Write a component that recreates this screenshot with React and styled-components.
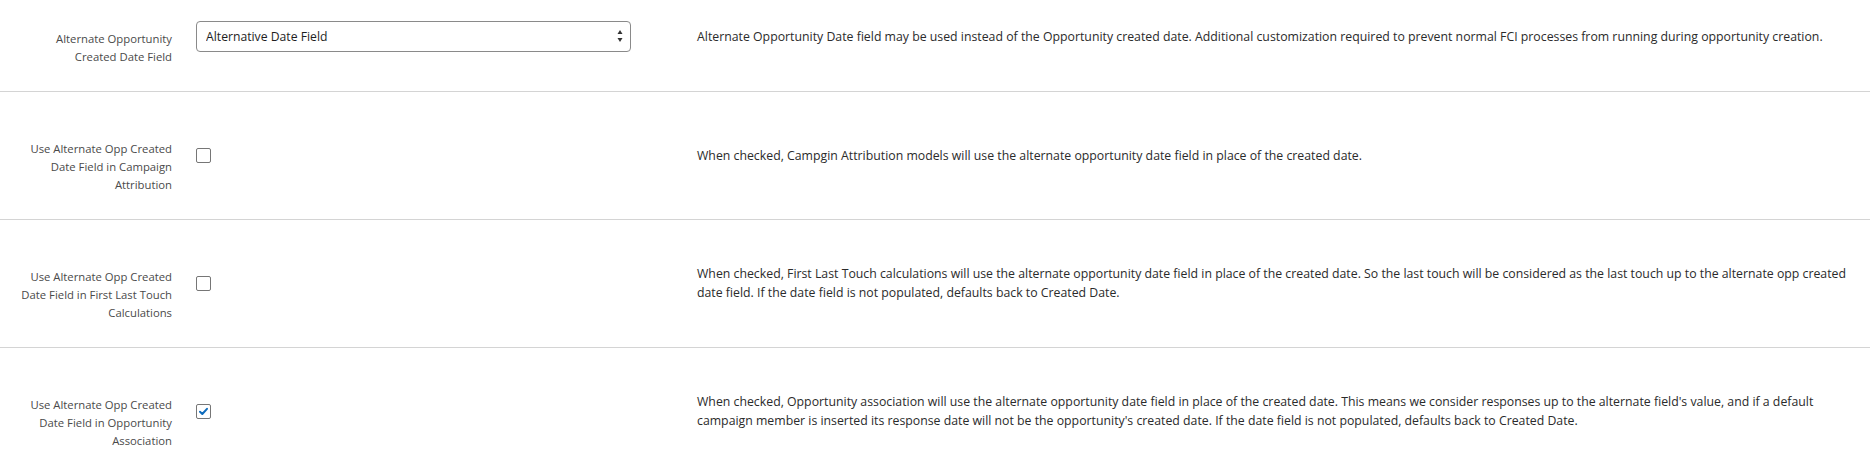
import React from 'react';
import styled, { createGlobalStyle } from 'styled-components';

const GlobalStyle = createGlobalStyle`
  html, body {
    margin: 0;
    padding: 0;
    background: #fff;
  }

  body {
    font-family: "Open Sans", "Noto Sans", "Liberation Sans", sans-serif;
    color: #181818;
  }
`;

const Page = styled.div`
  width: 100%;
`;

const Row = styled.div`
  display: flex;
  align-items: center;
  padding: ${(p) => (p.first ? '6px' : '24px')} 12px 25px 16px;
  border-bottom: 1px solid #d4d4d4;
`;

const Label = styled.div`
  width: 156px;
  flex-shrink: 0;
  margin-right: 24px;
  padding-top: 24px;
  text-align: right;
  font-size: 11.3px;
  line-height: 18px;
  color: #4a4a4a;
`;

const ControlCell = styled.div`
  width: 435px;
  flex-shrink: 0;
  display: flex;
  align-items: center;
`;

const Description = styled.div`
  flex: 1;
  margin-left: 66px;
  font-size: 12.3px;
  line-height: 19px;
  color: #2b2b2b;
`;

const SelectWrap = styled.div`
  position: relative;
  width: 100%;
`;

const Select = styled.select`
  appearance: none;
  -webkit-appearance: none;
  width: 100%;
  height: 31px;
  margin: 0;
  padding: 0 24px 0 9px;
  border: 1px solid #8a8a8a;
  border-radius: 4px;
  background: #fff;
  font-family: inherit;
  font-size: 12.2px;
  color: #1e1e1e;
  outline: none;
`;

const Arrows = styled.svg`
  position: absolute;
  right: 8px;
  top: 50%;
  transform: translateY(-50%);
  pointer-events: none;
`;

const Box = styled.span`
  width: 15px;
  height: 15px;
  box-sizing: border-box;
  border: 1px solid #767676;
  border-radius: 2px;
  background: #fff;
  display: inline-flex;
  align-items: center;
  justify-content: center;
`;

function Checkbox({ checked }) {
  return (
    <Box role="checkbox" aria-checked={checked}>
      {checked && (
        <svg width="11" height="11" viewBox="0 0 11 11">
          <path
            d="M2 5.8 L4.3 8 L9 2.8"
            fill="none"
            stroke="#0f6cbd"
            strokeWidth="2"
            strokeLinecap="round"
            strokeLinejoin="round"
          />
        </svg>
      )}
    </Box>
  );
}

const rows = [
  {
    label: 'Alternate Opportunity Created Date Field',
    control: 'select',
    text: 'Alternate Opportunity Date field may be used instead of the Opportunity created date. Additional customization required to prevent normal FCI processes from running during opportunity creation.',
  },
  {
    label: 'Use Alternate Opp Created Date Field in Campaign Attribution',
    control: 'checkbox',
    checked: false,
    text: 'When checked, Campgin Attribution models will use the alternate opportunity date field in place of the created date.',
  },
  {
    label: 'Use Alternate Opp Created Date Field in First Last Touch Calculations',
    control: 'checkbox',
    checked: false,
    text: 'When checked, First Last Touch calculations will use the alternate opportunity date field in place of the created date. So the last touch will be considered as the last touch up to the alternate opp created date field. If the date field is not populated, defaults back to Created Date.',
  },
  {
    label: 'Use Alternate Opp Created Date Field in Opportunity Association',
    control: 'checkbox',
    checked: true,
    text: "When checked, Opportunity association will use the alternate opportunity date field in place of the created date. This means we consider responses up to the alternate field's value, and if a default campaign member is inserted its response date will not be the opportunity's created date. If the date field is not populated, defaults back to Created Date.",
  },
];

export default function App() {
  return (
    <Page>
      <GlobalStyle />
      {rows.map((row, i) => (
        <Row key={i} first={i === 0}>
          <Label>{row.label}</Label>
          <ControlCell>
            {row.control === 'select' ? (
              <SelectWrap>
                <Select defaultValue="alt">
                  <option value="alt">Alternative Date Field</option>
                </Select>
                <Arrows width="6" height="14" viewBox="0 0 6 14">
                  <path d="M3 1 L5.5 5 L0.5 5 Z" fill="#333" />
                  <path d="M0.5 9 L5.5 9 L3 13 Z" fill="#333" />
                </Arrows>
              </SelectWrap>
            ) : (
              <Checkbox checked={row.checked} />
            )}
          </ControlCell>
          <Description>{row.text}</Description>
        </Row>
      ))}
    </Page>
  );
}
